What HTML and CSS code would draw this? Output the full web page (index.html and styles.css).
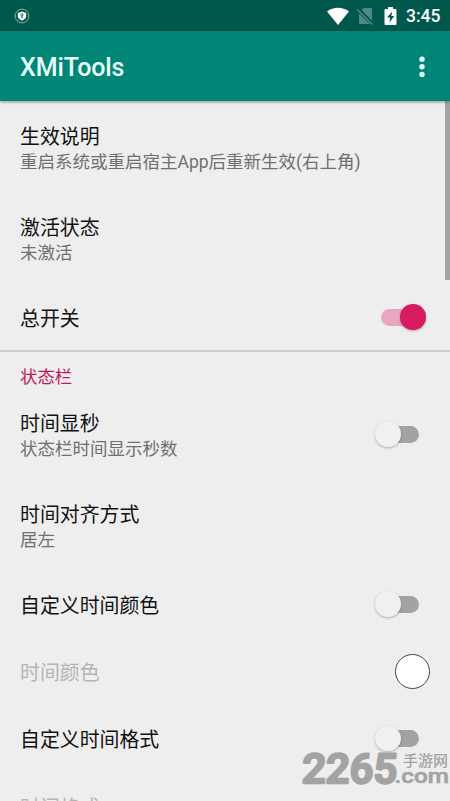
FILE: index.html
```
<!DOCTYPE html>
<html lang="zh-CN">
<head>
<meta charset="utf-8">
<title>XMiTools</title>
<link rel="stylesheet" href="styles.css">
</head>
<body>
<div class="screen">
  <header class="statusbar">
    <svg class="shield" width="16" height="16" viewBox="0 0 16 16"><circle cx="8" cy="8" r="6.900" fill="none" stroke="#a5cbc3" stroke-width=".8"/><path d="M8 3.500l4.200 1.400v3.400c0 2-1.700 3.400-4.200 4.500-2.500-1.100-4.200-2.500-4.200-4.500V4.900z" fill="#fff"/><path d="M8 10V7.800" stroke="#00574b" stroke-width="1.200"/><circle cx="8" cy="6.700" r="1.100" fill="none" stroke="#00574b" stroke-width=".8"/></svg>
    <div class="indicators">
      <svg class="wifi" width="24" height="20" viewBox="0 0 24 20"><path d="M1 5.500C7.500.500 16.500.500 23 5.500L12 19z" fill="#fff"/></svg>
      <svg class="sim" width="18" height="20" viewBox="0 0 18 20"><path d="M7.500 2H15q1 0 1 1v11.800L5.700 4zM3 7.500L13.800 18H4q-1 0-1-1z" fill="#4b8d83"/><path d="M1.200 3.500L16.300 18.500" stroke="#4b8d83" stroke-width="1.500"/></svg>
      <svg class="battery" width="13" height="20" viewBox="0 0 13 20"><path d="M4 1h5v2h2.500q1 0 1 1v14q0 1-1 1h-10q-1 0-1-1V4q0-1 1-1H4z" fill="#fff"/><path d="M8.200 5.500L3 11.500h3l-.5 5 4.700-6.500H7.300z" fill="#00574b"/></svg>
      <span class="clock">3:45</span>
    </div>
  </header>
  <div class="appbar">
    <h1>XMiTools</h1>
    <svg class="more" width="6" height="22" viewBox="0 0 6 22" fill="#e8fffa"><circle cx="3" cy="3.200" r="2.700"/><circle cx="3" cy="10.800" r="2.700"/><circle cx="3" cy="18.400" r="2.700"/></svg>
  </div>
  <main class="list">
    <div class="scrollbar"></div>
    <section class="group first">
      <div class="row tall"><div><p class="title">生效说明</p><p class="summary">重启系统或重启宿主App后重新生效(右上角)</p></div></div>
      <div class="row tall"><div><p class="title">激活状态</p><p class="summary">未激活</p></div></div>
      <div class="row"><p class="title">总开关</p><span class="switch on"></span></div>
    </section>
    <section class="group">
      <h2>状态栏</h2>
      <div class="row tall"><div><p class="title">时间显秒</p><p class="summary">状态栏时间显示秒数</p></div><span class="switch"></span></div>
      <div class="row tall"><div><p class="title">时间对齐方式</p><p class="summary">居左</p></div></div>
      <div class="row"><p class="title">自定义时间颜色</p><span class="switch"></span></div>
      <div class="row disabled"><p class="title">时间颜色</p><span class="color"></span></div>
      <div class="row"><p class="title">自定义时间格式</p><span class="switch"></span></div>
      <div class="row disabled last"><p class="title">时间格式</p></div>
    </section>
  </main>
  <svg class="watermark" width="150" height="42" viewBox="0 0 150 42">
    <text class="wm-num" transform="translate(1.500 33.500) skewX(-3)" textLength="95" lengthAdjust="spacingAndGlyphs">2265</text>
    <text class="wm-cn" x="103" y="17" textLength="45" lengthAdjust="spacingAndGlyphs">手游网</text>
    <text class="wm-com" x="94.500" y="34" textLength="54.500" lengthAdjust="spacingAndGlyphs">.com</text>
  </svg>
</div>
</body>
</html>
```
FILE: styles.css
```
* { box-sizing: border-box; }
body, h1, h2, p { margin: 0; }
body { background: #eee; font-family: Roboto, "Noto Sans CJK SC", sans-serif; }
.screen { position: relative; width: 450px; height: 801px; overflow: hidden; background: #eee; }
.statusbar { height: 31px; background: #00574b; display: flex; align-items: center; justify-content: space-between; padding: 0 9.500px 0 14px; color: #fff; }
.indicators { display: flex; align-items: center; }
.wifi { margin-right: 6px; }
.sim { margin-right: 10px; }
.battery { margin-right: 9px; }
.clock { font-size: 17.500px; font-weight: 500; line-height: 31px; padding-top: 2px; }
.appbar { position: relative; z-index: 1; height: 70px; background: #008577; display: flex; align-items: center; justify-content: space-between; padding: 2px 25px 0 20px; box-shadow: 0 1px 3px rgba(0, 0, 0, .4); }
.appbar h1 { font-size: 25px; font-weight: 500; letter-spacing: -.1px; color: #e8fffa; line-height: 32px; padding-top: 2px; }
.list { position: relative; padding-top: 2px; }
.scrollbar { position: absolute; right: 0; top: 0; width: 5px; height: 179px; background: #a4a4a4; }
.first { height: 249px; border-bottom: 2px solid #cfcfcf; }
.group h2 { height: 38px; padding: 13px 20px 0; font-size: 17.400px; font-weight: 400; line-height: 24px; color: #c2185b; }
.row { height: 67.300px; padding: 0 20px; display: flex; align-items: center; justify-content: space-between; }
.row.tall { height: 90.700px; }
.title { font-size: 19.900px; line-height: 27px; padding-top: 2px; color: #111; }
.tall .title { padding-top: 1px; margin-bottom: -1px; }
.last .title { padding-top: 4px; }
.summary { font-size: 17.500px; line-height: 24px; color: #707070; white-space: nowrap; }
.disabled .title { color: #b4b4b4; }
.switch { position: relative; width: 38.500px; height: 17px; margin: 0 11px 2px 0; border-radius: 9px; background: #a3a3a3; }
.switch::after { content: ""; position: absolute; left: -5.500px; top: -4.500px; width: 25.500px; height: 25.500px; border-radius: 50%; background: #f0f0f0; box-shadow: 0 1px 2.500px rgba(0, 0, 0, .28); }
.switch.on { background: #e8a6c0; }
.switch.on::after { left: 19.500px; background: #d81b60; }
.color { width: 35px; height: 35px; margin-bottom: 1px; border: 1px solid #444; border-radius: 50%; background: #fff; }
.watermark { position: absolute; left: 300px; top: 749px; fill: #a3a3a3; stroke: #a3a3a3; stroke-linejoin: round; }
.wm-num { font: 500 41px Roboto, sans-serif; stroke-width: 2.600px; }
.wm-cn { font: 500 14.500px "Noto Sans CJK SC", sans-serif; stroke: none; }
.wm-com { font: 500 21px Roboto, sans-serif; stroke-width: .6px; }
```
